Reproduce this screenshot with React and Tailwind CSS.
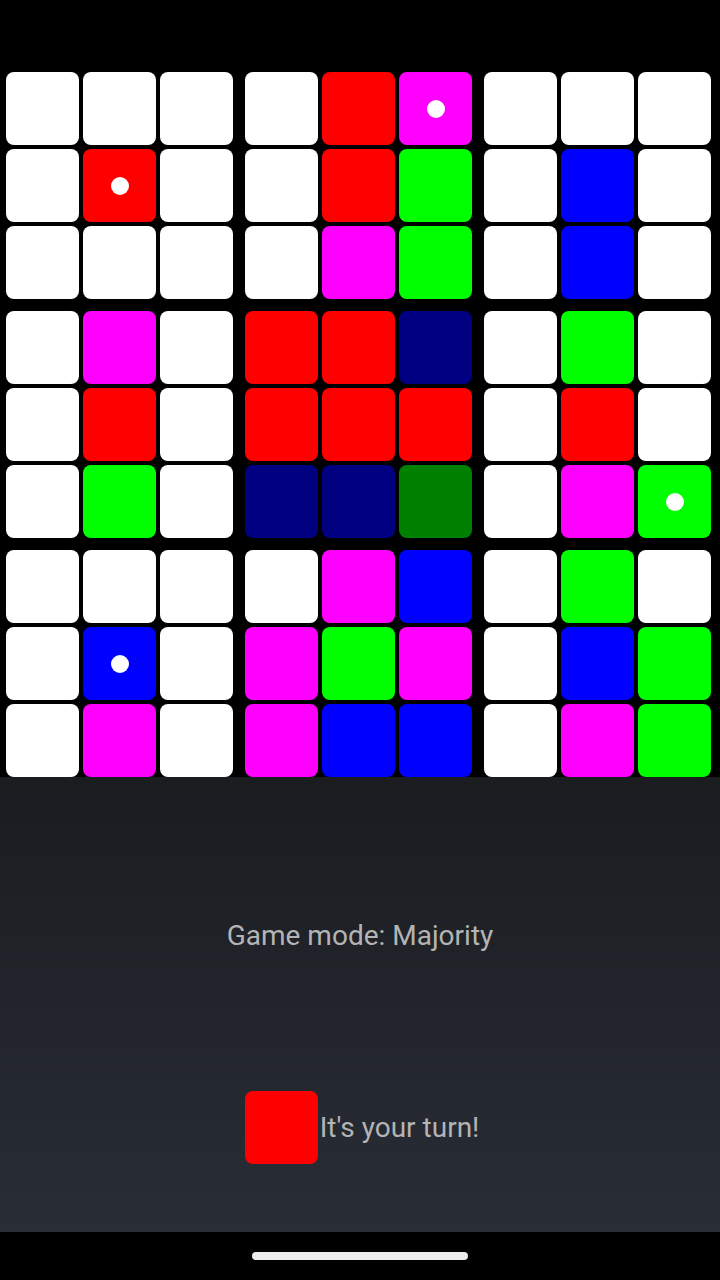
const W = 'bg-white'
const R = 'bg-[#ff0000]'
const M = 'bg-[#ff00ff]'
const G = 'bg-[#00ff00]'
const B = 'bg-[#0000ff]'
const N = 'bg-[#000080]'
const D = 'bg-[#008000]'

// 9x9 board, row by row
const BOARD = [
  [W, W, W, W, R, M, W, W, W],
  [W, R, W, W, R, G, W, B, W],
  [W, W, W, W, M, G, W, B, W],
  [W, M, W, R, R, N, W, G, W],
  [W, R, W, R, R, R, W, R, W],
  [W, G, W, N, N, D, W, M, G],
  [W, W, W, W, M, B, W, G, W],
  [W, B, W, M, G, M, W, B, G],
  [W, M, W, M, B, B, W, M, G],
]

const DOTS = ['0-5', '1-1', '5-8', '7-1']

function Cell({ color, dot }) {
  return (
    <div className={`w-[73px] h-[73px] rounded-[8px] flex items-center justify-center ${color}`}>
      {dot && <div className="w-[18px] h-[18px] rounded-full bg-white" />}
    </div>
  )
}

function Block({ br, bc }) {
  const cells = []
  for (let r = br * 3; r < br * 3 + 3; r++) {
    for (let c = bc * 3; c < bc * 3 + 3; c++) {
      cells.push(<Cell key={`${r}-${c}`} color={BOARD[r][c]} dot={DOTS.includes(`${r}-${c}`)} />)
    }
  }
  return <div className="grid grid-cols-3 gap-[4px]">{cells}</div>
}

export default function App() {
  return (
    <div
      className="w-[720px] h-[1280px] flex flex-col bg-black overflow-hidden"
      style={{ fontFamily: 'Roboto, "Liberation Sans", sans-serif' }}
    >
      <div className="h-[72px] shrink-0" />

      <div className="flex flex-col gap-[12px] pl-[6px] pr-[9px] shrink-0">
        {[0, 1, 2].map((br) => (
          <div key={br} className="flex gap-[12px]">
            {[0, 1, 2].map((bc) => (
              <Block key={bc} br={br} bc={bc} />
            ))}
          </div>
        ))}
      </div>

      <div className="flex-1 flex flex-col items-center bg-gradient-to-b from-[#1a1c20] to-[#292d36] pt-[141px]">
        <div className="text-[28px] leading-[36px] text-[#b4b4b4]">Game mode: Majority</div>
        <div className="flex items-center mt-[137px] pl-[4px]">
          <div className="w-[73px] h-[73px] rounded-[8px] bg-[#ff0000]" />
          <span className="ml-[2px] text-[28px] leading-[36px] text-[#b4b4b4]">It's your turn!</span>
        </div>
      </div>

      <div className="h-[48px] shrink-0 bg-black flex items-center justify-center">
        <div className="w-[216px] h-[8px] rounded-full bg-[#ececec]" />
      </div>
    </div>
  )
}
